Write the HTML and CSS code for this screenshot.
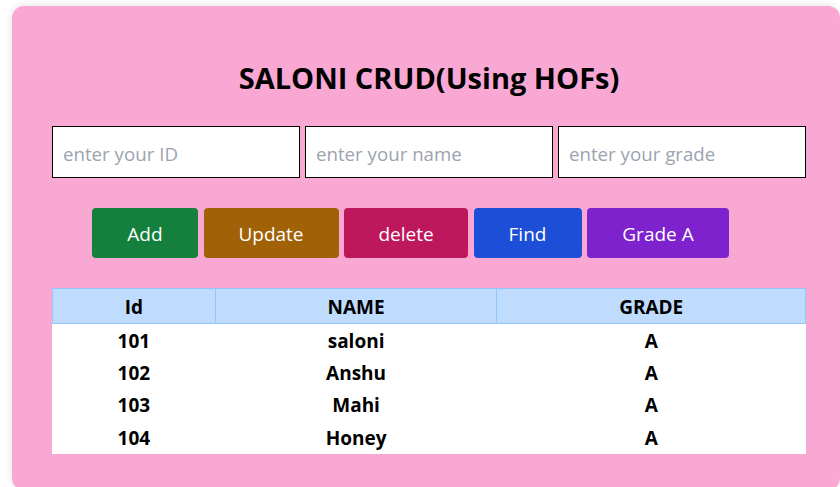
FILE: index.html
```html
<!DOCTYPE html>
<html lang="en">
<head>
<meta charset="utf-8">
<title>SALONI CRUD</title>
<link rel="stylesheet" href="styles.css">
</head>
<body>
<div class="card">
  <h1 class="title">SALONI CRUD(Using HOFs)</h1>
  <div class="inputs">
    <input class="field" type="text" placeholder="enter your ID">
    <input class="field" type="text" placeholder="enter your name">
    <input class="field" type="text" placeholder="enter your grade">
  </div>
  <div class="actions">
    <button class="btn btn-add">Add</button>
    <button class="btn btn-update">Update</button>
    <button class="btn btn-delete">delete</button>
    <button class="btn btn-find">Find</button>
    <button class="btn btn-grade">Grade A</button>
  </div>
  <table class="grid">
    <colgroup>
      <col class="c-id">
      <col class="c-name">
      <col class="c-grade">
    </colgroup>
    <thead>
      <tr><th>Id</th><th>NAME</th><th>GRADE</th></tr>
    </thead>
    <tbody>
      <tr><td>101</td><td>saloni</td><td>A</td></tr>
      <tr><td>102</td><td>Anshu</td><td>A</td></tr>
      <tr><td>103</td><td>Mahi</td><td>A</td></tr>
      <tr><td>104</td><td>Honey</td><td>A</td></tr>
    </tbody>
  </table>
</div>
</body>
</html>
```
FILE: styles.css
```css
* { box-sizing: border-box; }
html, body { margin: 0; padding: 0; background: #ffffff; overflow: hidden; }
body {
  font-family: "Open Sans", "Noto Sans", sans-serif;
  color: #000;
  padding: 6px 0 0 12px;
  height: 487px;
}
.card {
  width: 828px;
  height: 484px;
  background: #f9a8d4;
  border-radius: 12px;
  box-shadow: 0 0 8px rgba(0, 0, 0, 0.12);
  padding: 52px 0 0 40px;
}
.title {
  margin: 0 0 28px 0;
  font-size: 29px;
  font-weight: 700;
  line-height: 40px;
  text-align: center;
  width: 754px;
}
.inputs {
  display: flex;
  gap: 5px;
  width: 754px;
}
.field {
  width: 248px;
  height: 52px;
  border: 1px solid #000;
  background: #fff;
  padding: 2px 10px 0 10px;
  font-family: inherit;
  font-size: 18.7px;
  outline: none;
}
.field::placeholder { color: #9ca3af; }
.actions {
  display: flex;
  gap: 5.5px;
  margin: 30px 0 30px 40px;
}
.btn {
  height: 50px;
  border: none;
  border-radius: 4px;
  color: #fff;
  font-family: inherit;
  font-size: 19px;
  padding: 2px 0 0 0;
  cursor: pointer;
}
.btn-add { width: 106px; background: #15803d; }
.btn-update { width: 135px; background: #a16207; }
.btn-delete { width: 124px; background: #be185d; }
.btn-find { width: 108px; background: #1d4ed8; }
.btn-grade { width: 142px; background: #7e22ce; }
.grid {
  width: 754px;
  border-collapse: collapse;
  background: #fff;
  font-size: 19px;
  font-weight: 700;
}
.c-id { width: 163px; }
.c-name { width: 282px; }
.c-grade { width: 309px; }
.grid th {
  background: #bfdbfe;
  border: 1px solid #93c5fd;
  height: 35px;
  padding: 1px 0 0 0;
  font-weight: 700;
}
.grid td {
  height: 32.5px;
  padding: 1px 0 0 0;
  text-align: center;
}
```
